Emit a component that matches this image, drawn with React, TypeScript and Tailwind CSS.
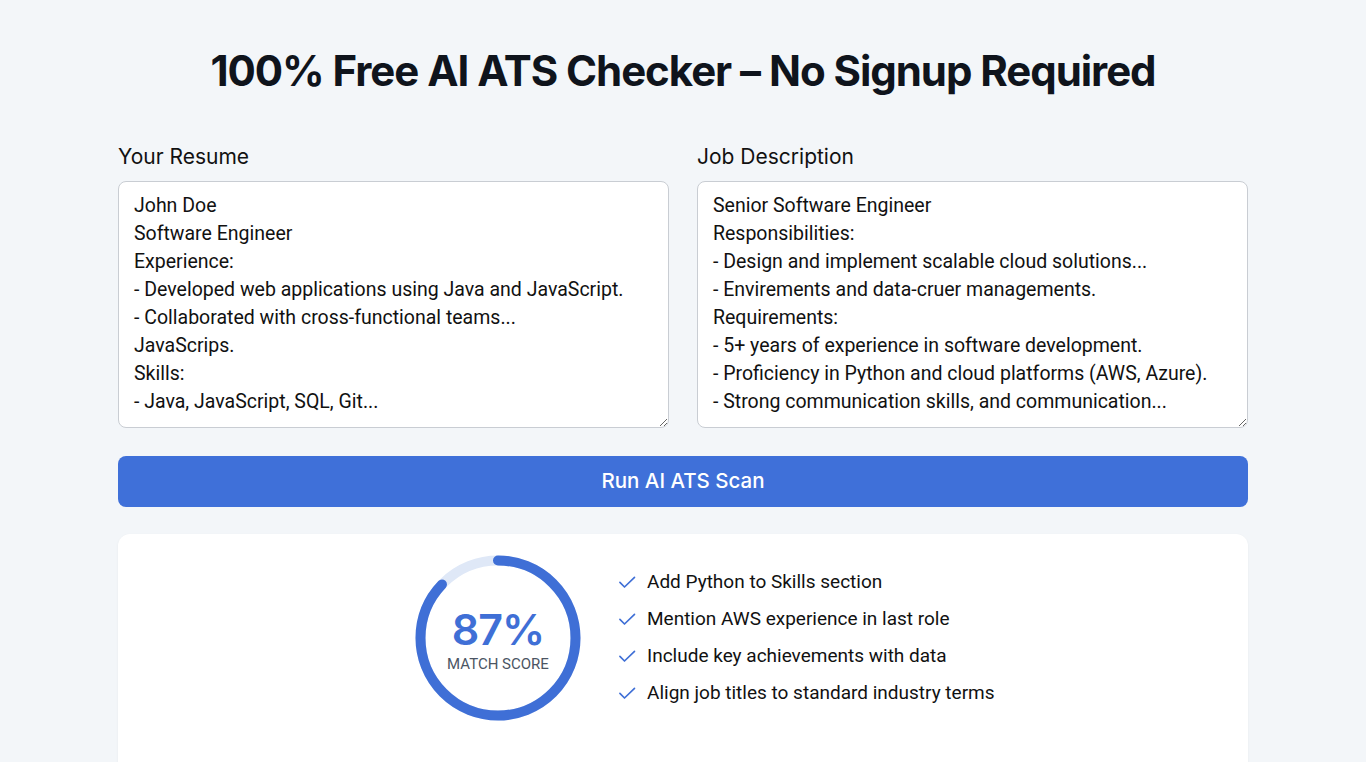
import React from "react";

const resume = `John Doe
Software Engineer
Experience:
- Developed web applications using Java and JavaScript.
- Collaborated with cross-functional teams...
JavaScrips.
Skills:
- Java, JavaScript, SQL, Git...`;

const job = `Senior Software Engineer
Responsibilities:
- Design and implement scalable cloud solutions...
- Envirements and data-cruer managements.
Requirements:
- 5+ years of experience in software development.
- Proficiency in Python and cloud platforms (AWS, Azure).
- Strong communication skills, and communication...`;

const tips = [
  "Add Python to Skills section",
  "Mention AWS experience in last role",
  "Include key achievements with data",
  "Align job titles to standard industry terms",
];

function Check() {
  return (
    <svg width="20" height="20" viewBox="0 0 24 24" fill="none" stroke="#3f6fd6" strokeWidth="2" strokeLinecap="round" strokeLinejoin="round">
      <path d="M3.5 12.5l5.5 5.5L21 6.5" />
    </svg>
  );
}

function Ring() {
  const r = 77.5;
  const c = 2 * Math.PI * r;
  const pct = 0.87;
  return (
    <div className="relative w-[166px] h-[166px] shrink-0">
      <svg width="166" height="166" viewBox="0 0 166 166" className="absolute inset-0">
        <circle cx="83" cy="83" r={r} fill="none" stroke="#dfe8f7" strokeWidth="10" />
        <circle
          cx="83"
          cy="83"
          r={r}
          fill="none"
          stroke="#3f6fd6"
          strokeWidth="10"
          strokeLinecap="round"
          strokeDasharray={`${c * pct} ${c}`}
          transform="rotate(-90 83 83)"
        />
      </svg>
      <div className="absolute inset-0 flex flex-col items-center justify-center">
        <div className="text-[43px] leading-none font-semibold text-[#3f6fd6] tracking-[-1px] mt-[8px]">87%</div>
        <div className="text-[15px] text-[#4b5563] mt-[2px]" style={{ fontFamily: "Roboto, sans-serif" }}>MATCH SCORE</div>
      </div>
    </div>
  );
}

export default function App() {
  return (
    <div
      className="min-h-[762px] h-[762px] overflow-hidden bg-[#f3f6f9] text-[#111827]"
      style={{ fontFamily: "Inter, 'Noto Sans', sans-serif" }}
    >
      <div className="w-[1130px] mx-auto">
        <h1 className="pt-[43px] text-center text-[42px] leading-[56px] font-bold tracking-tight text-[#0f141c]">
          100% Free AI ATS Checker – No Signup Required
        </h1>
        <div className="mt-[44px] grid grid-cols-2 gap-[28px]">
          <div className="flex flex-col">
            <label className="text-[21px] leading-[28px] text-[#111]">Your Resume</label>
            <textarea
              defaultValue={resume}
              style={{ fontFamily: "Roboto, sans-serif" }}
              className="mt-[10px] h-[247px] w-full rounded-[8px] border border-[#c9cdd3] bg-white px-[15px] pt-[10px] text-[19.5px] leading-[28px] text-[#111] overflow-hidden resize-y outline-none"
            />
          </div>
          <div className="flex flex-col">
            <label className="text-[21px] leading-[28px] text-[#111]">Job Description</label>
            <textarea
              defaultValue={job}
              style={{ fontFamily: "Roboto, sans-serif" }}
              className="mt-[10px] h-[247px] w-full rounded-[8px] border border-[#c9cdd3] bg-white px-[15px] pt-[10px] text-[19.5px] leading-[28px] text-[#111] overflow-hidden resize-y outline-none"
            />
          </div>
        </div>
        <button className="mt-[28px] w-full h-[51px] rounded-[8px] bg-[#3f70d9] text-white text-[20.5px] font-medium">
          Run AI ATS Scan
        </button>
        <div className="mt-[27px] h-[260px] rounded-[12px] bg-white shadow-[0_1px_3px_rgba(0,0,0,0.05)] flex pl-[297px] pt-[21px]">
          <div className="flex items-start gap-[36px]">
            <Ring />
            <ul className="flex flex-col gap-[11px] pt-[14px]" style={{ fontFamily: "Roboto, sans-serif" }}>
              {tips.map((t) => (
                <li key={t} className="flex items-center gap-[10px] text-[19px] leading-[26px] text-[#111]">
                  <Check />
                  <span>{t}</span>
                </li>
              ))}
            </ul>
          </div>
        </div>
      </div>
    </div>
  );
}
